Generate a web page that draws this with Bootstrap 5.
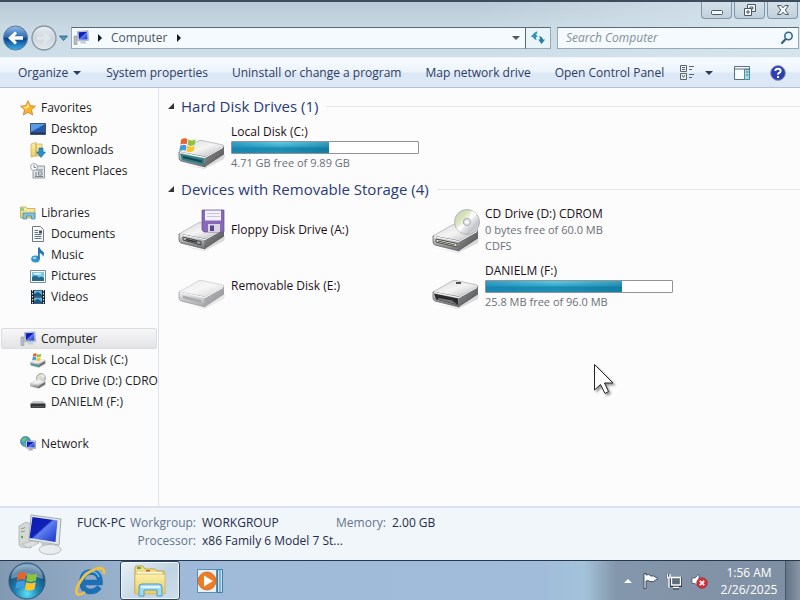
<!DOCTYPE html>
<html lang="en">
<head>
<meta charset="utf-8">
<meta name="viewport" content="width=device-width, initial-scale=1">
<title>Computer</title>
<link href="https://cdn.jsdelivr.net/npm/bootstrap@5.3.0/dist/css/bootstrap.min.css" rel="stylesheet">
<style>
body{font-family:"Open Sans","Noto Sans",sans-serif;font-size:12px;line-height:16px;color:#1c1c24;background:#fcfcfd}
svg{display:block;flex:none}
button{font:inherit;color:inherit;border:0;background:none;padding:0}
a{color:inherit;text-decoration:none}
.chrome{background:linear-gradient(90deg,#dbe8f000 60%,#d5e4ed),linear-gradient(#b9c9d6,#c9d9e3 45%,#cfdfe9);border-top:2px solid #3f4c5c}
.caption-bar{height:20px;gap:2px;padding-right:2px}
.caption-btn{width:31px;height:17px;border:1px solid #8296a8;border-top:0;border-radius:0 0 4px 4px;background:linear-gradient(#d5e1ea,#c0d0dc)}
.address-row{height:35px;padding:5px 1px 0 3px}
.travel{height:22px;gap:2px;padding-right:3px}
.field-box{height:22px;background:#f4fafd;border:1px solid #97a9b6;border-top-color:#5b6973}
.crumbs{color:#4d5663;gap:8px;padding-left:1px}
.refresh-btn{width:26px;height:22px;border:1px solid #97a9b6;border-top-color:#5b6973;border-left-color:#5b6973;background:#eaf5f9}
.search-box{width:242px;margin-left:6px}
.search-box input{border:0;outline:0;background:none;font-style:italic;min-width:0;padding:0 0 0 8px;color:#333}
.search-box input::placeholder{color:#858e98;opacity:1}
.commands{height:31px;padding-left:6px;background:linear-gradient(#f8fcff,#ebf3fc 48%,#dde8f6 52%,#dde8f6);border-top:1px solid #eef5fa;border-bottom:1px solid #b3c1d8;color:#2c3b62}
.commands button.cmd{padding:0 12px}
.view-tools{gap:20px;padding-right:14px}
.side{width:159px;border-right:1px solid #dbe3ee;padding:9px 1px 0}
.side a{height:21px;padding-left:19px;gap:5px}
.side a.sub{padding-left:29px}
.side a.current{background:linear-gradient(#f7f7f8,#e2e3e5);border:1px solid #dcdde0;padding-left:18px;border-radius:2px}
.side ul{margin-bottom:21px}
.files{padding:5px 0 0 8px}
.group-head{height:26px;font-size:15px;line-height:20px;color:#2a3a76;margin-bottom:0;font-weight:400}
.group-head::after{content:"";flex:1;height:1px;background:#e4e6ec;margin-left:8px}
.group-head button{width:14px}
.drives{display:grid;grid-template-columns:repeat(auto-fill,254px);grid-auto-rows:56px;padding-left:11px;margin-bottom:1px}
.drive{gap:5px;width:241px}
.drive .info{color:#6b6f75;font-size:11px}
.drive strong{font-weight:400;font-size:12px;color:#1c1018}
.usage{height:13px;margin:1px 0;border-radius:1px;background:#fff;border:1px solid #8f9499}
.usage .progress-bar{background:linear-gradient(90deg,#1683b0a0,#28a6cc20 50%,#0c6f9680),linear-gradient(#6fd0e6,#35a8cb 45%,#1688b0 55%,#218fb2)}
.details{height:54px;border-top:2px solid #d9e2ee;background:#f1f6fb;color:#1f2b47;padding:6px 0 0 18px}
.details dl{margin:0;padding-left:13px}
.details dt{font-weight:400;color:#64748c}
.details dd{margin:0}
.details-line{height:18px;line-height:18px}
.pc-name{width:52px}
.meta-label{width:67px;text-align:right;margin-right:6px}
.meta-value{width:117px}
.task{height:40px;background:linear-gradient(90deg,#8199b1,#8ea6c0 8%,#9fbad8 20%,#a1bcda 68%,#a3c3da 73%,#8496ab 77%,#7f8fa3);border-top:1px solid #26384d;color:#fff}
.task-btn{width:60px;height:39px}
.task-btn.active{border:1px solid #35485e;border-radius:3px;background:linear-gradient(135deg,#e8f0f6,#bfd3e2 60%,#cfe0ec);box-shadow:inset 0 0 0 1px #eef5fa}
.clock{width:72px;line-height:17px;text-align:center}
.peek{width:15px;height:39px;border-left:1px solid #48576a;background:linear-gradient(90deg,#657488,#8896a6)}
.pointer{position:absolute;left:593px;top:363px;filter:drop-shadow(2px 2px 1px #0006)}
</style>
<script src="https://cdn.jsdelivr.net/npm/bootstrap@5.3.0/dist/js/bootstrap.bundle.min.js"></script>
</head>
<body class="d-flex flex-column vh-100 overflow-hidden position-relative">
<svg width="0" height="0" class="position-absolute" aria-hidden="true">
<defs>
<linearGradient id="gBlue" x2="0" y2="1"><stop stop-color="#8fc0ea"/><stop offset=".48" stop-color="#2b66ae"/><stop offset=".52" stop-color="#0c3f8c"/><stop offset="1" stop-color="#38b4ee"/></linearGradient>
<linearGradient id="gGray" x2="0" y2="1"><stop stop-color="#e9eef2"/><stop offset=".5" stop-color="#cdd6dd"/><stop offset="1" stop-color="#e4eaee"/></linearGradient>
<linearGradient id="gScreen" x2="1" y2="1"><stop stop-color="#0b1cae"/><stop offset=".45" stop-color="#1022b8"/><stop offset=".5" stop-color="#5f7ff0"/><stop offset="1" stop-color="#1630c4"/></linearGradient>
<linearGradient id="gTop" x2="1" y2="1"><stop stop-color="#d8dadc"/><stop offset=".5" stop-color="#f4f4f4"/><stop offset="1" stop-color="#b4b6b8"/></linearGradient>
<linearGradient id="gFront" x2="0" y2="1"><stop stop-color="#e4e5e6"/><stop offset="1" stop-color="#6a6c6e"/></linearGradient>
<linearGradient id="gSide" x2="1" y2="1"><stop stop-color="#8c8e90"/><stop offset="1" stop-color="#4a4c4e"/></linearGradient>
<linearGradient id="gDisc" x2="1" y2="1"><stop stop-color="#c4c6c8"/><stop offset=".3" stop-color="#d6e3b8"/><stop offset=".5" stop-color="#f6f6f8"/><stop offset=".75" stop-color="#c2c4c8"/><stop offset="1" stop-color="#eceef0"/></linearGradient>
<linearGradient id="gYellow" x2="0" y2="1"><stop stop-color="#fbf0a8"/><stop offset="1" stop-color="#e9cd62"/></linearGradient>
<radialGradient id="gOrb" cy=".85" r=".9"><stop stop-color="#5fe0f4"/><stop offset=".35" stop-color="#1e86b6"/><stop offset=".7" stop-color="#1a4f7c"/><stop offset="1" stop-color="#86b2cc"/></radialGradient>
<symbol id="flag" viewBox="0 0 20 20"><path fill="#e8622c" d="M2.500 4Q6 1.500 9.500 3.500L8.500 9.300Q5 7.500 1.500 9.800Z"/><path fill="#8cc43c" d="M10.500 4Q14 6 18.500 3.500L17.500 9.500Q13.500 11.800 9.500 9.800Z"/><path fill="#3f9ade" d="M1.300 11Q5 8.700 8.300 10.500L7.300 16.500Q4 14.700 .3 16.800Z"/><path fill="#fbc628" d="M9.300 11Q13 13 17.300 10.800L16.200 16.800Q12.500 19 8.300 17Z"/></symbol>
<symbol id="box" viewBox="0 0 48 30"><path fill="#0002" d="M4 25L26 29 47 15 46 20 26 30Z"/><path fill="url(#gTop)" stroke="#9b9da0" stroke-width=".6" d="M1 13L20 2Q22 1 24 1.500L45 6Q47 7 45 8.500L27 18Z"/><path fill="url(#gFront)" stroke="#55585a" stroke-width=".7" d="M1 13L27 18V28L3 22Q1 21 1 19Z"/><path fill="url(#gSide)" d="M27 18L46 7.500V15.500L27 28Z"/><path stroke="#fff" fill="none" d="M2 13.500L27 18.500 45 8.500"/></symbol>
<symbol id="pc" viewBox="0 0 16 16"><path fill="#b9bfc4" stroke="#7d868e" stroke-width=".5" d="M1 6H4V14.500H1Z"/><path fill="#dfe3e8" stroke="#8790a8" stroke-width=".6" d="M4.500 1.500L15 .8 15.500 10.500 5 10.800Z"/><path fill="url(#gScreen)" d="M5.500 2.300L14.200 1.800 14.500 9.500 6 9.800Z"/><path fill="#c9cdd4" d="M8 11H12L14 13.500H7Z"/></symbol>
<symbol id="down" viewBox="0 0 10 6"><path fill="currentColor" d="M1 1H9L5 5Z"/></symbol>
<symbol id="tri" viewBox="0 0 6 8"><path fill="#111820" d="M1 0L5 4 1 8Z"/></symbol>
<symbol id="corner" viewBox="0 0 8 8"><path fill="#333" d="M7 1V7H1Z"/></symbol>
</defs></svg>

<header class="chrome">
<div class="caption-bar d-flex justify-content-end">
<button class="caption-btn d-flex justify-content-center align-items-center" aria-label="Minimize"><svg width="14" height="14"><rect x="1.500" y="7.500" width="11" height="4" rx="1" fill="#f6fafc" stroke="#4b5865"/></svg></button>
<button class="caption-btn d-flex justify-content-center align-items-center" aria-label="Restore"><svg width="14" height="14" fill="#f6fafc" stroke="#4b5865"><path d="M4.500 1.500H12.500V8.500H4.500Z"/><path d="M7 4H10V6H7Z"/><path d="M1.500 5.500H8.500V12.500H1.500Z"/><path d="M4 8H6V10H4Z"/></svg></button>
<button class="caption-btn d-flex justify-content-center align-items-center" aria-label="Close"><svg width="14" height="14"><path fill="#f6fafc" stroke="#4b5865" d="M1.500 2.500H5L7 4.800 9 2.500H12.500L9.300 7 12.500 11.500H9L7 9.200 5 11.500H1.500L4.700 7Z"/></svg></button>
</div>
<div class="address-row d-flex">
<div class="travel d-flex align-items-center">
<button aria-label="Back"><svg width="26" height="26" viewBox="0 0 26 26"><circle cx="12.500" cy="13" r="12" fill="url(#gBlue)" stroke="#5d7690"/><path fill="#fff" d="M5 13L12 6.500 14 8.500 11.500 11.300H20V14.700H11.500L14 17.500 12 19.500Z"/></svg></button>
<button aria-label="Forward"><svg width="26" height="26" viewBox="0 0 26 26"><circle cx="13" cy="13" r="12" fill="url(#gGray)" stroke="#8695a2" stroke-width="1.300"/><path fill="#e0e7eb" d="M20 13L13 7 11.500 8.500 14 11.500H6V14.500H14L11.500 17.500 13 19Z"/></svg></button>
<button aria-label="Recent pages"><svg width="9" height="8"><path fill="#4c9cc8" stroke="#2c5878" stroke-width=".8" d="M.5 2H8.500L4.500 6.500Z"/></svg></button>
</div>
<nav class="field-box crumbs d-flex align-items-center flex-grow-1 border-end-0" aria-label="Address">
<svg width="16" height="16"><use href="#pc"/></svg>
<svg width="6" height="8"><use href="#tri"/></svg>
<a href="#computer">Computer</a>
<svg width="6" height="8"><use href="#tri"/></svg>
<button class="ms-auto me-1" aria-label="Previous locations"><svg width="10" height="6"><use href="#down"/></svg></button>
</nav>
<button class="refresh-btn d-flex align-items-center justify-content-center" aria-label="Refresh"><svg width="16" height="16" viewBox="0 0 16 16"><path fill="#2b93b4" d="M.8 7L4.500 2.500 7.800 7H6Q6 8.500 6.500 10 3.500 9.500 3 7ZM4.500 3Q6 1 7.500 1.500L6.500 4.500Z"/><path fill="#2c7ea4" d="M15.200 9.500L11.500 14 8.200 9.500H10Q10 7.500 9 6 12.500 6.500 13 9.500Z"/></svg></button>
<label class="field-box search-box d-flex align-items-center"><input type="search" class="flex-grow-1" placeholder="Search Computer" aria-label="Search Computer"><svg class="me-1" width="14" height="14" viewBox="0 0 14 14"><circle cx="8.500" cy="5" r="3.700" fill="#e5f4fa" stroke="#356280" stroke-width="1.500"/><path stroke="#356280" stroke-width="2.200" stroke-linecap="round" d="M5.500 8.300L2 12"/></svg></label>
</div>
</header>

<div class="commands d-flex align-items-center text-nowrap">
<button class="cmd d-flex align-items-center">Organize<svg class="ms-1" width="10" height="6"><use href="#down"/></svg></button>
<button class="cmd">System properties</button>
<button class="cmd">Uninstall or change a program</button>
<button class="cmd">Map network drive</button>
<button class="cmd">Open Control Panel</button>
<div class="view-tools d-flex align-items-center ms-auto">
<div class="d-flex align-items-center gap-2">
<button aria-label="Change view"><svg width="16" height="16" viewBox="0 0 16 16" fill="none" stroke="#586474"><path fill="#eef6e8" d="M.5.5H6.500V6.500H.5ZM.5 8.500H6.500V14.500H.5Z"/><path d="M2 2.500H5M2 4.500H5M2 10L3.500 12.500 5 10M9 1.500H14M9 4.500H12M9 9.500H14M9 12.500H12"/></svg></button>
<button aria-label="More view options"><svg width="10" height="6"><use href="#down"/></svg></button>
</div>
<button aria-label="Show the preview pane"><svg width="16" height="14" viewBox="0 0 16 14"><path fill="#fafdff" stroke="#547186" d="M.5.5H15.500V13.500H.5Z"/><path fill="#a8dbe4" stroke="#4690a4" d="M10.500 3.500H15.500V13.500H10.500Z"/><path stroke="#547186" d="M0 3H16M12 6H14.500M12 9H14.500"/></svg></button>
<button aria-label="Get help"><svg width="16" height="16" viewBox="0 0 16 16"><circle cx="8" cy="8" r="7.400" fill="#2c3fae" stroke="#8e98b8"/><path fill="none" stroke="#fff" stroke-width="2" d="M5.300 6Q5.500 3.800 8 3.800 10.700 3.800 10.600 6 10.500 7.300 9 8 8 8.500 8 9.800M8 11V13"/></svg></button>
</div>
</div>

<div class="d-flex flex-grow-1 overflow-hidden">
<nav class="side flex-shrink-0 overflow-hidden text-nowrap" aria-label="Navigation pane">
<ul class="list-unstyled">
<li><a href="#favorites" class="d-flex align-items-center"><svg width="16" height="16" viewBox="0 0 16 16"><path fill="#fbb42e" stroke="#d8792a" stroke-width=".8" d="M8 .8L10.200 5.600 15.400 6.200 11.500 9.800 12.700 15 8 12.300 3.300 15 4.500 9.800.6 6.200 5.800 5.600Z"/><path fill="#ffe985" d="M8 3L9.400 6.700 6 9 3 7 6.500 6.500Z"/></svg>Favorites</a></li>
<li><a href="#desktop" class="sub d-flex align-items-center"><svg width="16" height="16" viewBox="0 0 16 16"><path fill="#2857ae" stroke="#3c5577" d="M.5 2.500H15.500V13.500H.5Z"/><path fill="#5a9be4" d="M1 3H15L1 11Z"/><path fill="#26344a" d="M1 11.500H15V13H1Z"/></svg>Desktop</a></li>
<li><a href="#downloads" class="sub d-flex align-items-center"><svg width="16" height="16" viewBox="0 0 16 16"><path fill="url(#gYellow)" stroke="#c9a850" stroke-width=".7" d="M1 2L6 .5V14L1 15ZM6 2H12V14H6Z"/><path fill="#2a8fd0" stroke="#1a6aa4" stroke-width=".6" d="M9 6H13V10H15.500L11 15.500 6.500 10H9Z"/></svg>Downloads</a></li>
<li><a href="#recent" class="sub d-flex align-items-center"><svg width="16" height="16" viewBox="0 0 16 16"><path fill="#dfe3e6" stroke="#7d868c" stroke-width=".8" d="M4 3H14.500V15H3V9Z"/><circle cx="4" cy="4" r="3.500" fill="#f7f9fa" stroke="#8d969c" stroke-width=".8"/><path stroke="#707a82" fill="none" stroke-width=".9" d="M4 2V4.500H6M6 7H13M6 9V13M8.500 9H12V12H8.500ZM5 13.500H13"/></svg>Recent Places</a></li>
</ul>
<ul class="list-unstyled">
<li><a href="#libraries" class="d-flex align-items-center"><svg width="16" height="16" viewBox="0 0 16 16"><path fill="url(#gYellow)" stroke="#b49c48" stroke-width=".7" d="M.5 2H6L7 3.500H15V13H.5Z"/><path fill="#8ed08a" d="M1 2.500H4V6H1Z"/><path fill="#7fc4e0" stroke="#3c86ae" stroke-width=".7" d="M3 14V8H15V14H11.500V11H6.500V14Z"/></svg>Libraries</a></li>
<li><a href="#documents" class="sub d-flex align-items-center"><svg width="16" height="16" viewBox="0 0 16 16"><path fill="#fafbfc" stroke="#6d7880" d="M2.500.5H10.500L13.500 3.500V15.500H2.500Z"/><path stroke="#5f7482" d="M4.500 4.500H8M4.500 6.500H8M4.500 8.500H11.500M4.500 10.500H11.500M4.500 12.500H11.500"/><path fill="#444f58" d="M9 4.500H12V7.500H9Z"/></svg>Documents</a></li>
<li><a href="#music" class="sub d-flex align-items-center"><svg width="16" height="16" viewBox="0 0 16 16"><ellipse cx="5.500" cy="12" rx="4.300" ry="3.400" fill="#2f93cc"/><path fill="#2577ae" d="M8 .5H9.800Q10.500 3.500 13 4.500 15 6 13 10 13 7 9.800 6V12H8Z"/><ellipse cx="4.500" cy="11" rx="1.800" ry="1.200" fill="#9ad6f2"/></svg>Music</a></li>
<li><a href="#pictures" class="sub d-flex align-items-center"><svg width="16" height="16" viewBox="0 0 16 16"><path fill="#fff" stroke="#73909f" d="M.5 2.500H15.500V14.500H.5Z"/><path fill="#7cc8ea" d="M2 4H14V13H2Z"/><path fill="#276b8c" d="M2 9Q6 6 9 9.500 12 8 14 10V13H2Z"/><path fill="#e8f8fd" d="M4 5H11V6.500H4Z"/></svg>Pictures</a></li>
<li><a href="#videos" class="sub d-flex align-items-center"><svg width="16" height="16" viewBox="0 0 16 16"><path fill="#1c2630" d="M1 1H15V15H1Z"/><path fill="#63b0dc" d="M4 1.500H12V7.500H4ZM4 8.500H12V14.500H4Z"/><path fill="#1f5680" d="M4 5L8 3 12 6V7.500H4ZM4 12L8 10 12 13V14.500H4Z"/><path stroke="#e8edf0" stroke-dasharray="1.500 1.500" d="M2.500 1V15M13.500 1V15"/></svg>Videos</a></li>
</ul>
<ul class="list-unstyled">
<li><a href="#computer" id="computer" class="current d-flex align-items-center" aria-current="page"><svg width="16" height="16"><use href="#pc"/></svg>Computer</a></li>
<li><a href="#c" class="sub d-flex align-items-center"><svg width="16" height="16" viewBox="0 0 16 16"><use href="#box" y="6" width="16" height="10"/><path fill="#4d9b94" d="M1 11L9 13V15L1 13Z"/><use href="#flag" x="2" width="10" height="10"/></svg>Local Disk (C:)</a></li>
<li><a href="#d" class="sub d-flex align-items-center"><svg width="16" height="16" viewBox="0 0 16 16"><circle cx="11" cy="5" r="4.500" fill="url(#gDisc)" stroke="#96999c" stroke-width=".8"/><circle cx="11" cy="5" r="1.200" fill="#fff" stroke="#999" stroke-width=".5"/><use href="#box" y="6" width="16" height="10"/></svg>CD Drive (D:) CDROM</a></li>
<li><a href="#f" class="sub d-flex align-items-center"><svg width="16" height="16" viewBox="0 0 16 16"><path fill="#c6c8ca" d="M3 7H13L15.500 10H.5Z"/><path fill="#343638" d="M.5 9.500H15.500V13Q15.500 14 14.500 14H1.500Q.5 14 .5 13Z"/><path fill="#77797b" d="M2 12.500H14V13.200H2Z"/></svg>DANIELM (F:)</a></li>
</ul>
<ul class="list-unstyled">
<li><a href="#network" class="d-flex align-items-center"><svg width="16" height="16" viewBox="0 0 16 16"><circle cx="5.500" cy="5.500" r="5" fill="#3e9fca" stroke="#256d94" stroke-width=".6"/><path fill="#72c468" d="M2 3Q5 .5 7 2L5 5 2 6ZM3 8L6 7 5 10Z"/><path fill="#e6eaf0" stroke="#6c7890" stroke-width=".6" d="M6 4.500L15.500 5V12.500L6 12Z"/><path fill="url(#gScreen)" d="M7 5.500L14.700 6V11.600L7 11.200Z"/><path fill="#a4abb4" d="M9 12.300H12L13 14.500H8Z"/></svg>Network</a></li>
</ul>
</nav>

<main class="files flex-grow-1 overflow-hidden text-nowrap">
<section>
<h2 class="group-head d-flex align-items-center"><button aria-label="Collapse Hard Disk Drives"><svg width="8" height="8"><use href="#corner"/></svg></button>Hard Disk Drives (1)</h2>
<div class="drives">
<a href="#c" class="drive d-flex align-items-center"><svg width="48" height="48" viewBox="0 0 48 48"><use href="#box" y="16" width="48" height="30"/><path fill="#2e7f88" d="M2 30.500L26 35.500V42L4 37Z"/><path fill="#17454c" d="M5 33L24 37.500V39.500L5 35Z"/><use href="#flag" x="1" y="13" width="18" height="18"/></svg>
<div class="flex-grow-1 info"><strong class="d-block">Local Disk (C:)</strong><div class="progress usage" role="progressbar" aria-label="Used space" aria-valuenow="52" aria-valuemin="0" aria-valuemax="100"><div class="progress-bar" style="width:52%"></div></div>4.71 GB free of 9.89 GB</div></a>
</div>
</section>
<section>
<h2 class="group-head d-flex align-items-center"><button aria-label="Collapse Devices with Removable Storage"><svg width="8" height="8"><use href="#corner"/></svg></button>Devices with Removable Storage (4)</h2>
<div class="drives">
<a href="#a" class="drive d-flex align-items-center"><svg width="48" height="48" viewBox="0 0 48 48"><use href="#box" y="15" width="48" height="30"/><path fill="none" stroke="#444" d="M5 31L23 35.500V39L5 34Z"/><path stroke="#333" stroke-width="1.500" d="M8 33.500L19 36"/><path fill="#8868b8" stroke="#684a98" stroke-width=".7" d="M24 4H46V26H26L24 24Z"/><path fill="#f4f2fa" d="M27 4.500H43V14.500H27Z"/><path stroke="#c9c2da" d="M29 7.500H42M29 10.500H42"/><path fill="#d8d4e4" d="M30 18H42V26H30Z"/><path fill="#5c4488" d="M32 19.500H36V25H32Z"/></svg><strong>Floppy Disk Drive (A:)</strong></a>
<a href="#d" class="drive d-flex align-items-center"><svg width="48" height="48" viewBox="0 0 48 48"><use href="#box" y="17" width="48" height="30"/><path fill="#e8e8da" stroke="#4a4b44" d="M4 33L25 37.500V41L4 36Z"/><path stroke="#55564c" d="M6 35L23 39"/><circle cx="35" cy="16" r="12.500" fill="url(#gDisc)" stroke="#a5a8ab" stroke-width=".8"/><path fill="#fffb" d="M35 16L40 4.500 45 8ZM35 16L28 26 24 22Z"/><circle cx="35" cy="16" r="3.600" fill="#e2e4e6" stroke="#999ca0" stroke-width=".8"/><circle cx="35" cy="16" r="1.500" fill="#fff"/></svg><div class="info"><strong class="d-block">CD Drive (D:) CDROM</strong>0 bytes free of 60.0 MB<br>CDFS</div></a>
<a href="#e" class="drive d-flex align-items-center"><svg width="48" height="48" viewBox="0 0 48 48" opacity=".6"><use href="#box" y="17" width="48" height="30"/><path fill="#777" d="M5 33.500L23 38V41L5 36.500Z"/></svg><strong>Removable Disk (E:)</strong></a>
<a href="#f" class="drive d-flex align-items-center"><svg width="48" height="48" viewBox="0 0 48 48"><use href="#box" y="17" width="48" height="30"/><path fill="#2a2b2c" d="M2 31.500L26 36.500V43L4 37.500Z"/><path fill="#77797b" d="M6 36L20 38.500 25 42.500 6 37.500Z"/><path fill="#4d4f51" d="M24 20H29V22H24Z"/></svg><div class="flex-grow-1 info"><strong class="d-block">DANIELM (F:)</strong><div class="progress usage" role="progressbar" aria-label="Used space" aria-valuenow="73" aria-valuemin="0" aria-valuemax="100"><div class="progress-bar" style="width:73%"></div></div>25.8 MB free of 96.0 MB</div></a>
</div>
</section>
</main>
</div>

<footer class="details d-flex flex-shrink-0 text-nowrap">
<svg width="46" height="42" viewBox="0 0 46 42"><path fill="#d5d9d6" stroke="#a5aaa8" stroke-width=".7" d="M1 12L8 8 13 10V34L3 33 1 31Z"/><path stroke="#8d9492" d="M3 15L7 13.500M3 18L7 17"/><circle cx="4" cy="23" r="1.200" fill="#48b048"/><path fill="#e4e7e8" stroke="#a7abae" d="M13 1L43 5 41 31 11 26Z"/><path fill="url(#gScreen)" d="M14.500 3L39.500 6.500 37.500 28 11.500 24Z"/><path fill="#c2c7ca" d="M23 28H31L32 33H24Z"/><ellipse cx="32" cy="35.500" rx="11" ry="5" fill="#e9ecee" stroke="#aeb3b6" stroke-width=".8"/><path fill="#dde1e2" stroke="#a7acaf" stroke-width=".6" d="M4 30L14 27 21 29 10 34Z"/></svg>
<dl>
<div class="details-line d-flex"><dd class="pc-name">FUCK-PC</dd><dt class="meta-label">Workgroup:</dt><dd class="meta-value">WORKGROUP</dd><dt class="meta-label">Memory:</dt><dd>2.00 GB</dd></div>
<div class="details-line d-flex"><dd class="pc-name"></dd><dt class="meta-label">Processor:</dt><dd>x86 Family 6 Model 7 St...</dd></div>
</dl>
</footer>

<div class="task d-flex align-items-center flex-shrink-0">
<button class="task-btn d-flex align-items-center ps-2" aria-label="Start"><svg width="38" height="38" viewBox="0 0 38 38"><circle cx="19" cy="19" r="18" fill="url(#gOrb)" stroke="#2d5878"/><path fill="#ffffff58" d="M3 17Q4 3 19 2.500 34 3 35 17 19 10 3 17Z"/><use href="#flag" x="7" y="7" width="24" height="24"/></svg></button>
<button class="task-btn d-flex align-items-center justify-content-center" aria-label="Internet Explorer"><svg width="32" height="32" viewBox="0 0 32 32"><path fill="none" stroke="#1c6fb4" stroke-width="5.500" d="M25.500 22Q22 26.500 16.500 26.500 8 26 8 16.500 8.500 7 17 7 26 7.500 26 17.500H9"/><path fill="none" stroke="#66c1ea" stroke-width="1.500" d="M8 14Q10 6.500 17 6.500 23 6.500 25 12"/><path fill="none" stroke="#f0c040" stroke-width="2.800" d="M30 9Q31 2 23 3.500 12 7 6 17 0 27 4 29.500 7 30 11 27"/></svg></button>
<button class="task-btn active d-flex align-items-center justify-content-center" aria-label="Windows Explorer"><svg width="34" height="32" viewBox="0 0 34 32"><path fill="#f3dc80" stroke="#c2a348" d="M2 3Q2 1 4 1H10L12 4H22L24 6H31V28H2Z"/><path fill="#5ba858" d="M4 2H8V4H4Z"/><path fill="#d05848" d="M13 5H17V6.500H13Z"/><path fill="#fffbe0" d="M4 7H29V11H4Z"/><path fill="url(#gYellow)" stroke="#cdb05a" stroke-width=".7" d="M2 9H32V29H2Z"/><path fill="#a4daf0" stroke="#4c9cc4" d="M6 31V22Q6 19 9 19H26Q29 19 29 22V31H24V25H11V31Z"/><path fill="#e3f6fc" d="M8 21H27V23H8Z"/></svg></button>
<button class="task-btn d-flex align-items-center justify-content-center" aria-label="Media Player"><svg width="28" height="26" viewBox="0 0 28 26"><path fill="#c8e2f2" stroke="#3a7fae" d="M6 1.500H26.500V24.500H6Z"/><path stroke="#3a7fae" d="M21.500 2V24M24 2V24"/><path fill="#e6f1f7" stroke="#5e8dac" d="M1.500 1.500H20.500V24.500H1.500Z"/><circle cx="11" cy="13" r="9" fill="#ee7d22" stroke="#c85c14" stroke-width=".7"/><path fill="#fff" d="M8 7.500L17 13 8 18.500Z"/></svg></button>
<div class="d-flex align-items-center ms-auto">
<button aria-label="Show hidden icons"><svg width="10" height="6"><path fill="#fff" d="M1 5H9L5 1Z"/></svg></button>
<svg class="ms-2" width="20" height="18" viewBox="0 0 20 18" role="img" aria-label="Action Center"><path fill="#fff" stroke="#2a3645" stroke-width=".8" d="M3 1.500H5V3Q8 1.500 10 4H12.500L17 6.500 12.500 9.500H9Q7 8 5 9V16.500H3Z"/></svg>
<svg class="ms-1" width="18" height="18" viewBox="0 0 18 18" role="img" aria-label="Network"><path fill="none" stroke="#2a3645" stroke-width="3" d="M5.500 6.500H15.500V13.500H6ZM3 2V6M8 16H14"/><path fill="#5c6f80" stroke="#fff" stroke-width="1.300" d="M6.500 5.500H15.500V13H6.500ZM8 15.500H14M2 5.500H5.500M2.500 2V6M5 2V6M4 6V15.500"/></svg>
<svg class="ms-2" width="18" height="18" viewBox="0 0 18 18" role="img" aria-label="Volume muted"><path fill="#fff" stroke="#3c4856" stroke-width=".7" d="M1 6H4L8 2V15L4 11.500H1Z"/><circle cx="11" cy="11" r="5.300" fill="#d8303a" stroke="#a31c28" stroke-width=".6"/><path stroke="#fff" stroke-width="1.700" d="M8.800 8.800L13.200 13.200M13.200 8.800L8.800 13.200"/></svg>
<div class="clock ms-1"><div>1:56 AM</div><div>2/26/2025</div></div>
<button class="peek" aria-label="Show desktop"></button>
</div>
</div>
<svg class="pointer" width="22" height="32" viewBox="0 0 22 32" aria-hidden="true"><path fill="#fff" stroke="#222" d="M1.500 1.500V27L7.500 21.500 12 30.500 15.500 28.500 11.500 20H20Z"/></svg>
</body>
</html>
